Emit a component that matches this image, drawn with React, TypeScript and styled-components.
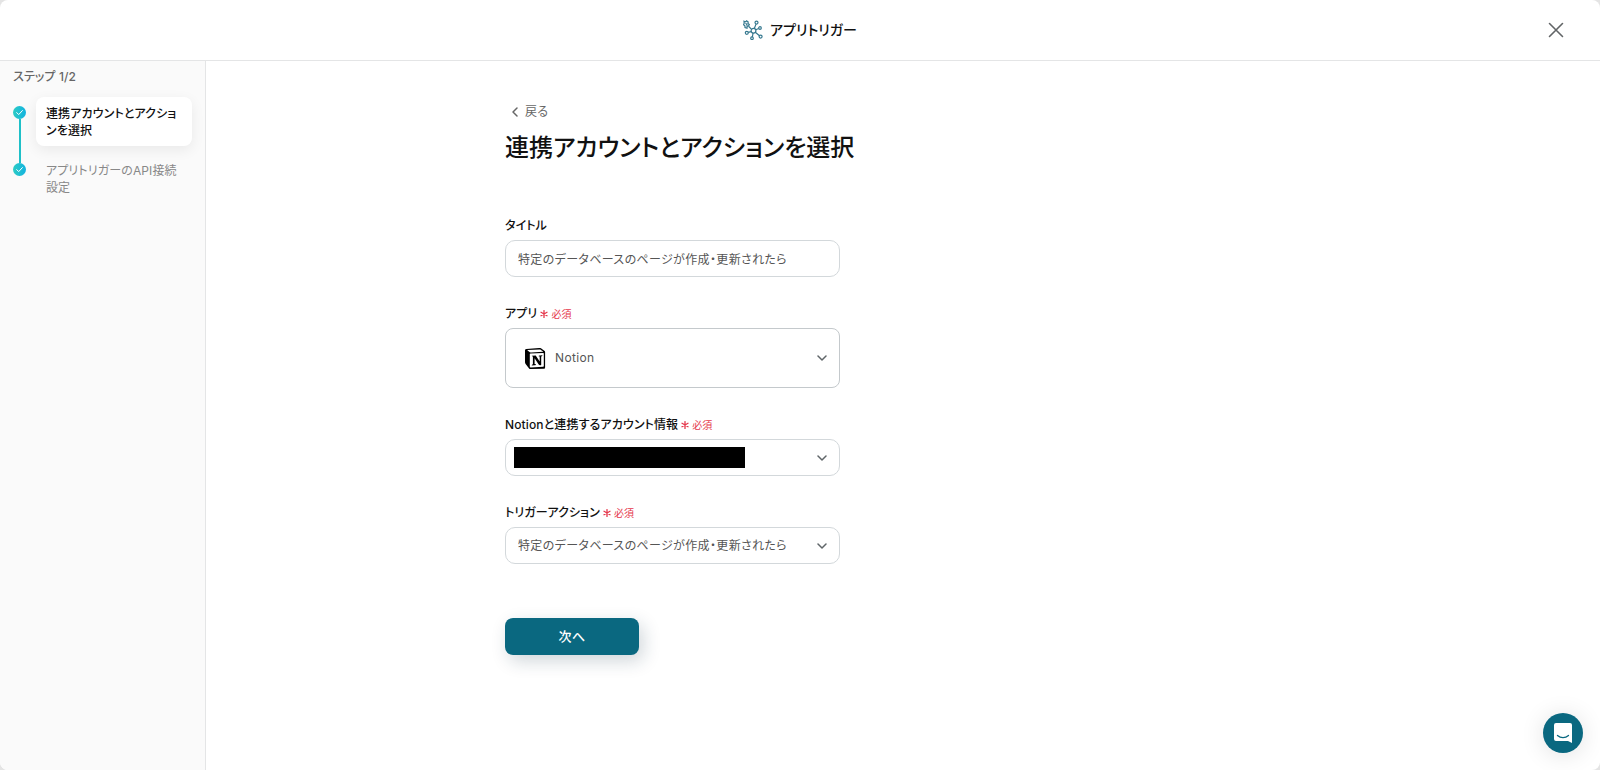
import React, { useState } from "react";
import styled, { createGlobalStyle } from "styled-components";

const GlobalStyle = createGlobalStyle`
  *, *::before, *::after { box-sizing: border-box; }
  body {
    margin: 0;
    background: #e4e4e4;
    color: #111;
    font-family: Inter, "Noto Sans CJK JP", sans-serif;
    font-size: 12px;
    line-height: 18px;
    font-feature-settings: "palt";
    letter-spacing: 0.01em;
  }
  button, input, select {
    font: inherit;
    font-feature-settings: inherit;
    letter-spacing: 0.03em;
  }
`;

const Shell = styled.div`
  min-height: 100vh;
  display: flex;
  flex-direction: column;
  background: #fff;
  border-radius: 8px;
  overflow: hidden;
`;

const Header = styled.header`
  display: grid;
  grid-template-columns: 1fr auto 1fr;
  align-items: center;
  height: 61px;
  padding: 0 32px;
  border-bottom: 1px solid #e4e5e6;
`;

const Brand = styled.div`
  grid-column: 2;
  display: flex;
  align-items: center;
  gap: 7px;
  font-size: 14px;
  line-height: 20px;
  font-weight: 500;
  letter-spacing: normal;
`;

const CloseButton = styled.button`
  grid-column: 3;
  justify-self: end;
  display: flex;
  padding: 4px;
  border: 0;
  background: none;
  color: #626567;
  cursor: pointer;
`;

const Body = styled.div`
  flex: 1;
  display: flex;
`;

const Sidebar = styled.aside`
  flex: none;
  width: 206px;
  padding: 7px 13px;
  background: #fafafa;
  border-right: 1px solid #e4e5e6;
`;

const StepCount = styled.p`
  margin: 0 0 11px;
  color: #666;
  font-weight: 500;
`;

const StepList = styled.ol`
  margin: 0;
  padding: 0;
  list-style: none;
`;

const Step = styled.li`
  display: flex;
  gap: 10px;
`;

const Rail = styled.div<{ $last?: boolean }>`
  display: flex;
  flex-direction: column;
  align-items: center;
  padding-top: 9px;
  &::after {
    content: "";
    display: ${(p) => (p.$last ? "none" : "block")};
    flex: 1;
    width: 2px;
    margin-bottom: -9px;
    background: #1fc0c8;
  }
`;

const StepLabel = styled.div<{ $active?: boolean }>`
  flex: 1;
  min-width: 0;
  margin-bottom: 8px;
  padding: 8px 10px 7px;
  line-height: 17px;
  border-radius: 8px;
  color: ${(p) => (p.$active ? "#111" : "#888")};
  font-weight: ${(p) => (p.$active ? 500 : 400)};
  background: ${(p) => (p.$active ? "#fff" : "transparent")};
  box-shadow: ${(p) => (p.$active ? "0 4px 14px rgba(0, 0, 0, 0.07)" : "none")};
`;

const Main = styled.main`
  flex: 1;
  padding: 42px 24px;
`;

const Form = styled.form`
  max-width: 796px;
  margin: 0 auto;
`;

const BackButton = styled.button`
  display: flex;
  align-items: center;
  gap: 4px;
  padding: 0 4px;
  border: 0;
  background: none;
  color: #666;
  cursor: pointer;
`;

const Title = styled.h1`
  margin: 11px 0 52px;
  font-size: 24px;
  line-height: 32px;
  font-weight: 500;
  letter-spacing: normal;
`;

const Field = styled.div`
  width: 335px;
  max-width: 100%;
  margin-bottom: 27px;
`;

const FieldHead = styled.div`
  display: flex;
  align-items: center;
  gap: 3px;
  height: 20px;
  margin-bottom: 4px;
  font-weight: 500;
`;

const Required = styled.span`
  display: flex;
  align-items: center;
  gap: 3px;
  color: #e5384c;
  font-size: 10px;
  font-weight: 400;
`;

const TextInput = styled.input`
  display: block;
  width: 100%;
  height: 37px;
  padding: 0 12px;
  border: 1px solid #d3d8db;
  border-radius: 10px;
  background: #fff;
  color: #555;
`;

const SelectWrap = styled.div`
  position: relative;
`;

const Select = styled.select<{ $tall?: boolean }>`
  appearance: none;
  display: block;
  width: 100%;
  height: ${(p) => (p.$tall ? "60px" : "37px")};
  padding: 0 36px 0 ${(p) => (p.$tall ? "49px" : "12px")};
  border: 1px solid ${(p) => (p.$tall ? "#c4c9cc" : "#d3d8db")};
  border-radius: ${(p) => (p.$tall ? "8px" : "10px")};
  background: #fff;
  color: #555;
`;

const Overlay = styled.span<{ $side: "left" | "right" }>`
  position: absolute;
  top: 0;
  bottom: 0;
  ${(p) => (p.$side === "left" ? "left: 20px;" : "right: 13px;")}
  display: flex;
  align-items: center;
  pointer-events: none;
  color: #5f6568;
`;

const Redaction = styled.span`
  position: absolute;
  top: 8px;
  left: 9px;
  width: 231px;
  height: 21px;
  background: #000;
  pointer-events: none;
`;

const NextButton = styled.button`
  display: block;
  width: 134px;
  height: 37px;
  margin-top: 54px;
  padding: 0 0 2px;
  border: 0;
  border-radius: 8px;
  background: #0a6880;
  color: #fff;
  font-size: 13px;
  font-weight: 500;
  box-shadow: 4px 6px 18px rgba(20, 50, 70, 0.2);
  cursor: pointer;
`;

const ChatButton = styled.button`
  position: fixed;
  right: 17px;
  bottom: 17px;
  display: flex;
  align-items: center;
  justify-content: center;
  width: 40px;
  height: 40px;
  padding: 0;
  border: 0;
  border-radius: 50%;
  background: #0a6880;
  box-shadow: 0 2px 24px rgba(0, 0, 0, 0.12);
  cursor: pointer;
`;

const NetworkIcon = () => (
  <svg width="20" height="20" viewBox="0 0 20 20" fill="none" stroke="#35788f" strokeWidth="1.200" aria-hidden="true">
    <circle cx="10.500" cy="10.800" r="2.400" />
    <circle cx="13.500" cy="2.600" r="1.500" />
    <circle cx="17" cy="8" r="1.300" />
    <circle cx="17.600" cy="16.600" r="1.500" />
    <circle cx="9" cy="18.200" r="1.300" />
    <circle cx="3.800" cy="12.800" r="1.500" />
    <path d="M11.300 8.500l1.700-4.400M12.700 9.800l3-1.300M12.300 12.300l4.200 3.400M10.100 13.200L9.300 17M8.200 11.600l-3 .8M8.600 9.300L5.800 6.500" />
    <path d="M1 1.200l1.600.7 1-1 1.600 1.100-.3 1.500 1.400 1-.8 1.600-1.400-.1L4 8.200l-2-.6V6L.6 4.700l.6-1.500zM2.600 3l1.600 2.200" />
  </svg>
);

const NotionIcon = () => (
  <svg width="21" height="21" viewBox="0 0 21 21" aria-hidden="true">
    <path fill="#000" d="M1.300.9L14.200 0c1 0 1.400.1 2.100.6l3 2.100c.6.4.8.7.8 1.400v15.100c0 1-.4 1.500-1.600 1.600L5.700 21c-.8 0-1.300-.1-1.800-.8L.8 16.200C.3 15.500 0 15 0 14.300V2.300C0 1.500.4 1 1.300.9z" />
    <path fill="#fff" d="M2.300 2.300l2.200 1.800c.5.4.8.4 1.700.3l11.700-.7c.3 0 .1-.3-.1-.4l-1.900-1.400c-.4-.3-.8-.4-1.600-.3L2.800 2.100zM4.800 6.100v12.700c0 .5.3.7.8.7l12.500-.7c.5 0 .7-.3.7-.8V5.600c0-.5-.2-.7-.6-.7L5.500 5.500c-.5 0-.7.2-.7.600z" />
    <path fill="#000" d="M6.700 7.700l4-.3 4 6V8.600l-1.100-.3c0-.6.3-.9.8-.9l3-.2c0 .7-.3 1-1.200 1.200v8.500c-1 .5-1.900.5-2.500-.4L9.600 10.300v5.600l1.400.4c0 .8-.5 1-1.200 1l-3 .2c0-.6.2-.9 1.100-1.200V8.800z" />
  </svg>
);

const StepCheck = ({ id }: { id: string }) => (
  <svg width="13" height="13" viewBox="0 0 13 13" aria-hidden="true">
    <defs>
      <linearGradient id={id}>
        <stop offset="0" stopColor="#2cccc4" />
        <stop offset="1" stopColor="#12b2e0" />
      </linearGradient>
    </defs>
    <circle cx="6.500" cy="6.500" r="6.500" fill={`url(#${id})`} />
    <path d="M3.700 6.600l2 2 3.700-4" fill="none" stroke="#fff" strokeWidth="1" strokeLinecap="round" strokeLinejoin="round" />
  </svg>
);

const Chevron = () => (
  <Overlay $side="right">
    <svg width="10" height="6" viewBox="0 0 10 6" fill="none" stroke="currentColor" strokeWidth="1.500" strokeLinecap="round" strokeLinejoin="round" aria-hidden="true">
      <path d="M1 1l4 4 4-4" />
    </svg>
  </Overlay>
);

const RequiredMark = () => (
  <Required>
    <svg width="8" height="8" viewBox="0 0 8 8" stroke="currentColor" strokeWidth="1.300" strokeLinecap="round" aria-hidden="true">
      <path d="M4 .6v6.800M1 2.300l6 3.400M7 2.300L1 5.700" />
    </svg>
    必須
  </Required>
);

const TRIGGER = "特定のデータベースのページが作成・更新されたら";
const STEPS = ["連携アカウントとアクションを選択", "アプリトリガーのAPI接続設定"];

export default function App() {
  const [title, setTitle] = useState(TRIGGER);

  return (
    <>
      <GlobalStyle />
      <Shell>
        <Header>
          <Brand>
            <NetworkIcon />
            アプリトリガー
          </Brand>
          <CloseButton type="button" aria-label="閉じる">
            <svg width="16" height="16" viewBox="0 0 16 16" fill="none" stroke="currentColor" strokeWidth="1.600" strokeLinecap="round" aria-hidden="true">
              <path d="M1.500 1.500l13 13M14.500 1.500l-13 13" />
            </svg>
          </CloseButton>
        </Header>
        <Body>
          <Sidebar>
            <StepCount>ステップ 1/2</StepCount>
            <StepList>
              {STEPS.map((label, i) => (
                <Step key={label} aria-current={i === 0 ? "step" : undefined}>
                  <Rail $last={i === STEPS.length - 1}>
                    <StepCheck id={`step-${i}`} />
                  </Rail>
                  <StepLabel $active={i === 0}>{label}</StepLabel>
                </Step>
              ))}
            </StepList>
          </Sidebar>
          <Main>
            <Form onSubmit={(e: React.FormEvent) => e.preventDefault()}>
              <BackButton type="button">
                <svg width="12" height="12" viewBox="0 0 12 12" fill="none" stroke="currentColor" strokeWidth="1.500" strokeLinecap="round" strokeLinejoin="round" aria-hidden="true">
                  <path d="M8 2L4 6l4 4" />
                </svg>
                戻る
              </BackButton>
              <Title>連携アカウントとアクションを選択</Title>
              <Field>
                <FieldHead>
                  <label htmlFor="title">タイトル</label>
                </FieldHead>
                <TextInput id="title" value={title} onChange={(e) => setTitle(e.target.value)} />
              </Field>
              <Field>
                <FieldHead>
                  <label htmlFor="app">アプリ</label>
                  <RequiredMark />
                </FieldHead>
                <SelectWrap>
                  <Select id="app" $tall>
                    <option>Notion</option>
                  </Select>
                  <Overlay $side="left">
                    <NotionIcon />
                  </Overlay>
                  <Chevron />
                </SelectWrap>
              </Field>
              <Field>
                <FieldHead>
                  <label htmlFor="account">Notionと連携するアカウント情報</label>
                  <RequiredMark />
                </FieldHead>
                <SelectWrap>
                  <Select id="account" />
                  <Redaction />
                  <Chevron />
                </SelectWrap>
              </Field>
              <Field>
                <FieldHead>
                  <label htmlFor="trigger">トリガーアクション</label>
                  <RequiredMark />
                </FieldHead>
                <SelectWrap>
                  <Select id="trigger">
                    <option>{TRIGGER}</option>
                  </Select>
                  <Chevron />
                </SelectWrap>
              </Field>
              <NextButton type="submit">次へ</NextButton>
            </Form>
          </Main>
        </Body>
      </Shell>
      <ChatButton type="button" aria-label="チャットを開く">
        <svg width="20" height="22" viewBox="0 0 20 22" aria-hidden="true">
          <path fill="#fff" d="M3 1h14a2 2 0 0 1 2 2v18l-4-2H3a2 2 0 0 1-2-2V3a2 2 0 0 1 2-2z" />
          <path d="M4.500 13.500c3.200 2.700 7.800 2.700 11 0" fill="none" stroke="#0a6880" strokeWidth="1.300" strokeLinecap="round" />
        </svg>
      </ChatButton>
    </>
  );
}
